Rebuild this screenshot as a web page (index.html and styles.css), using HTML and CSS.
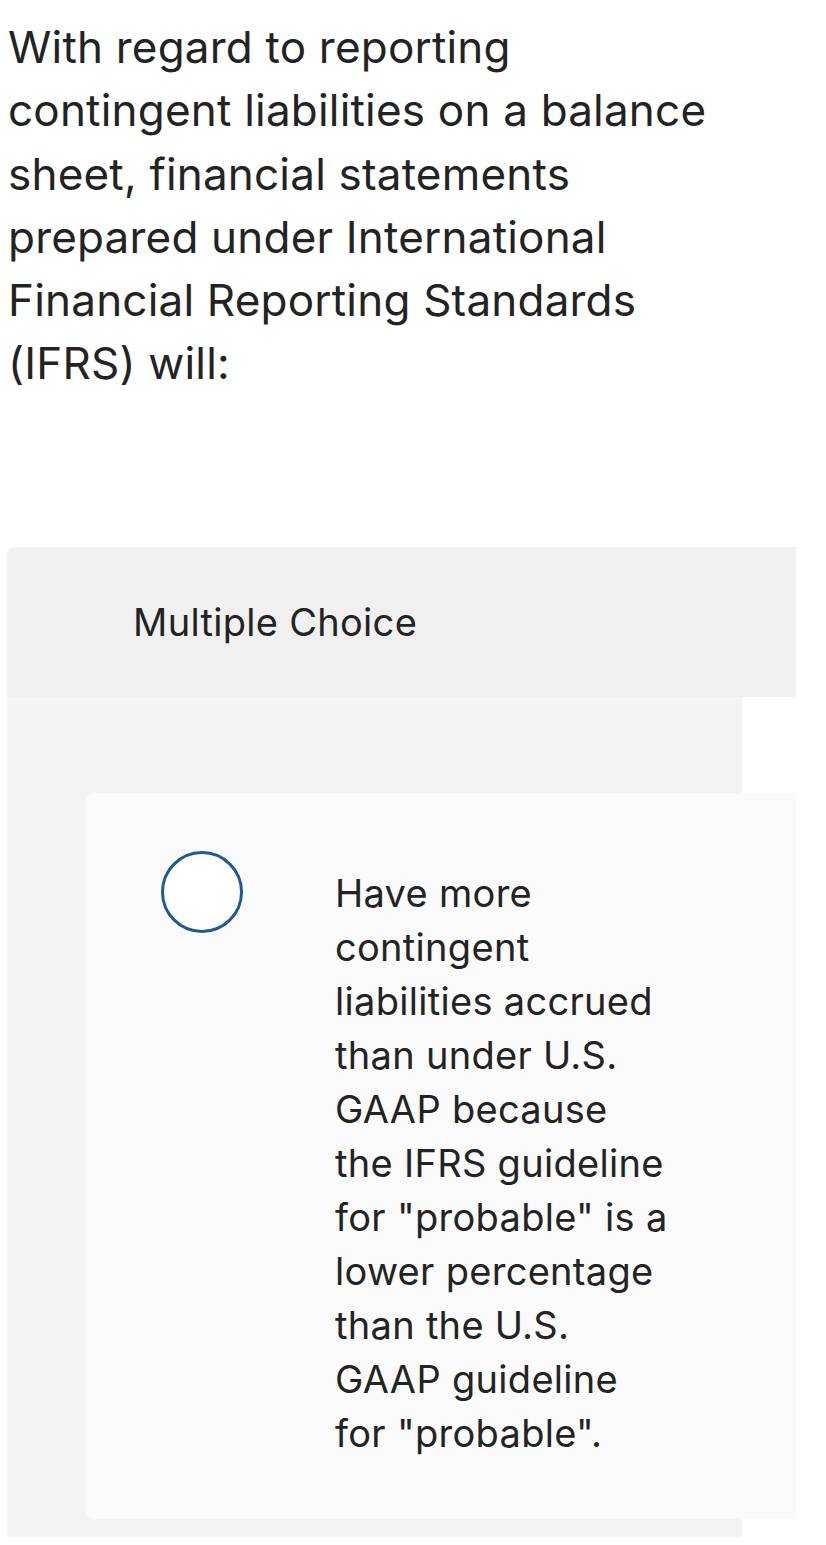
FILE: index.html
```html
<!DOCTYPE html>
<html lang="en">
<head>
<meta charset="utf-8">
<title>Multiple Choice</title>
<link rel="stylesheet" href="styles.css">
</head>
<body>
<p class="question">With regard to reporting contingent liabilities on a balance sheet, financial statements prepared under International Financial Reporting Standards (IFRS) will:</p>
<section class="mc">
  <header class="mc-head">Multiple Choice</header>
  <div class="mc-body">
    <label class="choice">
      <span class="radio"></span>
      <span class="choice-text">Have more contingent liabilities accrued than under U.S. GAAP because the IFRS guideline for "probable" is a lower percentage than the U.S. GAAP guideline for "probable".</span>
    </label>
  </div>
</section>
</body>
</html>
```
FILE: styles.css
```css
html, body {
  margin: 0;
  padding: 0;
  background: #ffffff;
}
body {
  font-family: Inter, "Open Sans", sans-serif;
  color: #232323;
  padding: 0 0 0 7px;
}
.question {
  margin: 16px 0 0 1px;
  width: 720px;
  font-size: 44px;
  line-height: 63.3px;
  letter-spacing: 0.2px;
}
.mc {
  margin-top: 151px;
  width: 789px;
  overflow: hidden;
  border-top-left-radius: 8px;
}
.mc-head {
  background: #f0f0f0;
  height: 150px;
  display: flex;
  align-items: center;
  padding-left: 126px;
  font-size: 38px;
  letter-spacing: 0.3px;
}
.mc-body {
  width: 735px;
  background: #f4f4f4;
  padding: 96px 0 18px 78px;
  box-sizing: border-box;
}
.choice {
  display: flex;
  align-items: flex-start;
  width: 740px;
  box-sizing: border-box;
  background: #fafafa;
  border-radius: 10px;
  padding: 58px 0 59px 76px;
}
.radio {
  flex: none;
  width: 82px;
  height: 82px;
  box-sizing: border-box;
  border: 3px solid #1f5a94;
  border-radius: 50%;
  background: #ffffff;
}
.choice-text {
  margin: 15px 0 0 92px;
  width: 336px;
  font-size: 38px;
  line-height: 54px;
  letter-spacing: 0.3px;
}
```
